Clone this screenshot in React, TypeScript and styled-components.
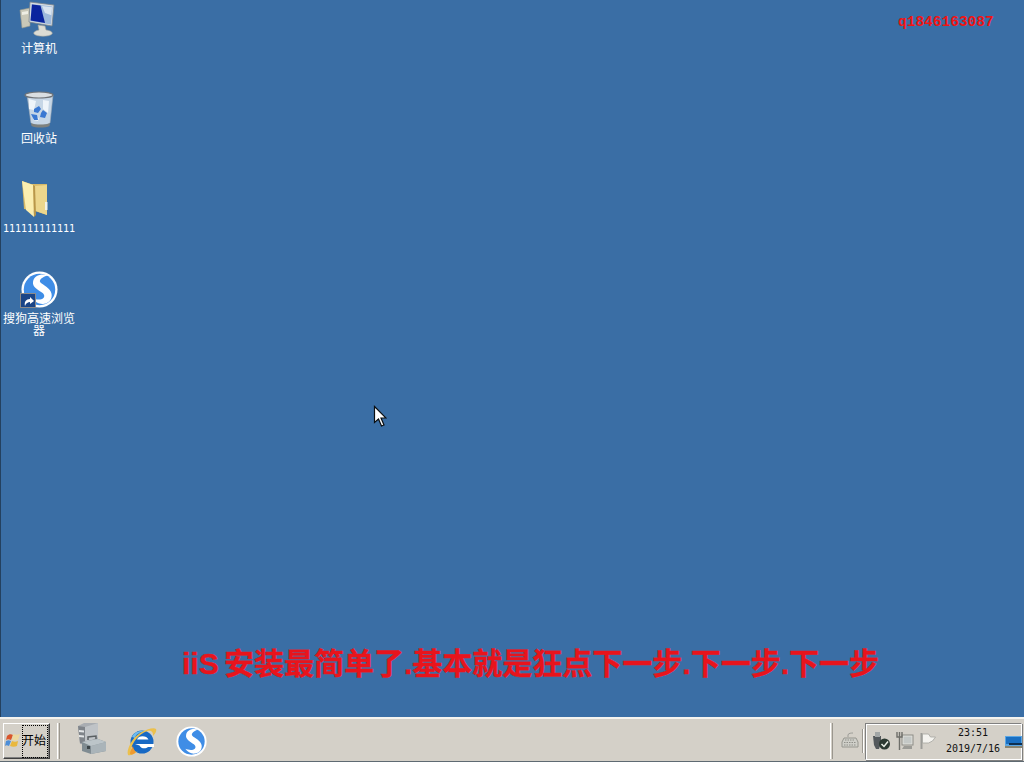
import React from "react";
import styled, { createGlobalStyle } from "styled-components";

const Global = createGlobalStyle`
  html, body { margin: 0; padding: 0; width: 1024px; height: 762px; overflow: hidden; }
  #root { width: 1024px; height: 762px; }
`;

const Screen = styled.div`
  width: 1024px; height: 762px; display: flex; flex-direction: column;
  background: #3a6ea5; position: relative; overflow: hidden;
  font-family: "Liberation Sans", "Noto Sans CJK SC", sans-serif;
`;
const Desktop = styled.main`
  flex: 1; min-height: 0; position: relative; border-left: 1px solid #24415f;
`;
const IconColumn = styled.div`
  display: flex; flex-direction: column; width: 76px;
`;
const DesktopItem = styled.div`
  height: 90px; display: flex; flex-direction: column; align-items: center; position: relative; width: 76px;
`;
const IconSlot = styled.div`
  height: 38px; width: 40px; position: relative; flex: none;
  svg { display: block; }
`;
const Label = styled.div<{ $mono?: boolean }>`
  margin-top: ${(p) => (p.$mono ? "5px" : "4px")}; width: 76px; text-align: center; color: #fff; line-height: 12px;
  font-size: ${(p) => (p.$mono ? "10px" : "12px")};
  font-family: ${(p) => (p.$mono ? '"DejaVu Sans Mono", monospace' : '"Noto Sans CJK SC", sans-serif')};
  white-space: ${(p) => (p.$mono ? "nowrap" : "normal")};
  word-break: break-all;
`;
const Watermark = styled.div`
  position: absolute; left: 897px; top: 13px; color: #f01414; font-weight: 700; font-size: 14.5px; line-height: 18px;
  font-family: "Liberation Mono", "DejaVu Sans Mono", monospace; white-space: nowrap;
`;
const Caption = styled.div`
  position: absolute; left: 181px; top: 645px; color: #e8141c; font-weight: 700; font-size: 30px; line-height: 38px;
  font-family: "Liberation Sans", "Noto Sans CJK SC", sans-serif; white-space: nowrap;
  word-spacing: -3px; -webkit-text-stroke: 0.4px #e8141c;
`;
const Cursor = styled.svg`
  position: absolute; left: 372px; top: 405px;
`;

const Taskbar = styled.footer`
  height: 45px; flex: none; box-sizing: border-box; background: #d4d0c8; border-top: 2px solid #f4f3ef;
  display: flex; align-items: center; padding: 2px 2px 0 3px; border-bottom: 1px solid #5f6a72;
`;
const StartButton = styled.button`
  width: 47px; height: 36px; box-sizing: border-box; padding: 0 0 0 1px; margin: 0;
  background: #d4d0c8; border: 1px solid; border-color: #fff #404040 #404040 #fff;
  box-shadow: inset -1px -1px 0 #808080;
  display: flex; align-items: center; color: #000;
`;
const StartFocus = styled.span`
  margin-left: 2px; width: 26px; height: 33px; box-sizing: border-box; border: 1px dotted #000;
  font: 12px/27px "Noto Sans CJK SC", sans-serif; display: block; white-space: nowrap; text-align: left; text-indent: -1px;
`;
const StartLogo = styled.svg`
  flex: none; margin-bottom: 3px;
`;
const Grip = styled.div<{ $ml: number }>`
  width: 3px; height: 36px; margin-left: ${(p) => p.$ml}px; box-sizing: border-box; flex: none;
  border-left: 1px solid #fff; border-right: 1px solid #9a968e; background: #d4d0c8;
`;
const Launch = styled.div`
  display: flex; align-items: center; margin-left: 18px; gap: 19px;
`;
const ServerGlyph = styled.svg`
  display: block; margin-bottom: 3px;
`;
const Spacer = styled.div`flex: 1;`;
const KeyboardSlot = styled.div`
  margin-left: 8px; width: 18px; height: 18px; flex: none;
`;
const ThinSep = styled.div`
  width: 1px; height: 24px; background: #9a968e; margin: 0 2px 0 3px; box-shadow: 1px 0 0 #fff; flex: none;
`;
const Tray = styled.div`
  width: 157px; height: 37px; box-sizing: border-box; flex: none; display: flex; align-items: center;
  border: 1px solid; border-color: #808080 #fff #fff #808080; padding-left: 6px; box-shadow: inset 1px 1px 0 #fff, 1px 1px 0 #808080;
`;
const TrayIcons = styled.div`display: flex; gap: 6px; align-items: center;`;
const Clock = styled.div`
  width: 64px; margin: 0 0 0 5px; text-align: center; font: 10px/16px "DejaVu Sans Mono", monospace; color: #111; flex: none;
`;
const ShowDesktop = styled.div`
  margin-top: 2px; width: 17px; flex: none;
  svg { display: block; }
`;
const Shortcut = styled.div`
  position: absolute; left: 1px; bottom: 0; width: 16px; height: 15px; box-sizing: border-box;
  background: #e8e8e8; border: 1px solid #8a8a8a; display: flex; align-items: center; justify-content: center;
`;
const SogouSpot = styled.div`
  padding: 1px 0 0 2px;
`;

const Computer = () => (
  <svg width="40" height="38" viewBox="0 0 40 38">
    <path d="M1 10l10-2v18l-8 2z" fill="#c9c8b8" stroke="#97978c" strokeWidth=".6" />
    <path d="M3 12l6-1v3l-6 1z" fill="#eeeee4" />
    <path d="M11 2l24 3-2 21-23-4z" fill="#d7dde2" stroke="#77838c" strokeWidth=".8" />
    <path d="M12.500 4l21 2.500-1.600 18L11.500 21z" fill="#9db9db" />
    <path d="M13 4.500l8.500 1 4.500 17.500-14.500-2.500z" fill="#0a249e" />
    <path d="M23 6l10 1.200-.6 8L26 13z" fill="#d9e4ef" />
    <path d="M19 25l7 1 1 4c5 .5 7 2.500 6 4-3 3-15 3-18 0-1-2 2-3.500 5-4z" fill="#dcdcd4" stroke="#a5a59c" strokeWidth=".6" />
  </svg>
);
const Recycle = () => (
  <svg width="40" height="38" viewBox="0 0 40 38">
    <path d="M8 5c5 3 18 3 26 0l-3 28c-4 3-16 3-19 0z" fill="#c6d6e6" stroke="#a2aeb8" strokeWidth=".6" />
    <ellipse cx="20" cy="5" rx="14" ry="3" fill="#d9dee2" stroke="#6f7378" strokeWidth="1.200" />
    <path d="M10 9l7 2-2 9-5-1zM24 10l6 1-1 12-5-4zM14 26l6 2-1 3-5-1z" fill="#eef4fa" />
    <path d="M12 33c4 2 15 2 19 0l-.500 3c-4 2-14 2-18 0z" fill="#7e817e" />
    <path d="M15 19l5-3 2 3-3 4-4-1zM24 20l4 3-2 5-5-1 1-4zM12 24l6 1 1 5-4 0z" fill="#3a78d2" />
  </svg>
);
const Folder = () => (
  <svg width="40" height="38" viewBox="0 0 40 38">
    <path d="M3 1l9 3h16v31l-12-4-11-2z" fill="#d6b968" />
    <path d="M14 6l14-1v30l-14-5z" fill="#ecd68c" />
    <path d="M3 1l11 4 1 32-8-7z" fill="#fbeeb0" />
    <path d="M15 37l-1-32 2 1 1 29z" fill="#b9974a" />
    <rect x="26" y="22" width="2.500" height="8" fill="#f2f2e8" />
  </svg>
);
const SogouMark = ({ size }: { size: number }) => (
  <svg width={size} height={size} viewBox="0 0 40 40">
    <circle cx="20" cy="20" r="19.500" fill="#fff" />
    <circle cx="20" cy="20" r="17" fill="#3f8de6" />
    <path d="M29 4.500c-7-2-15 0-16 7-1 6 6 9 10 12 3 2 3 6-1 7-3 1-7 0-10-1 3 4 8 7 13 6 6-1 9-6 8-11-1-6-9-9-12-12-2-3 2-6 8-8z" fill="#fff" />
  </svg>
);
const ArrowTile = () => (
  <svg width="14" height="13" viewBox="0 0 14 13">
    <rect width="14" height="13" fill="#1a4587" />
    <path d="M4 12c-1-4 1-7 5-7V3l4 4-4 3V8c-2 0-4 1-5 4z" fill="#fff" />
  </svg>
);
const Server = () => (
  <ServerGlyph width="29" height="33" viewBox="0 0 29 33">
    <path d="M0 3l6-3h14v19l-9 3-9-1z" fill="#a9adb2" />
    <path d="M0 3l7 1v17l-5-1z" fill="#7f848a" />
    <path d="M1 7l5 .500v2L1 9zM1 12l5 .500v2L1 14z" fill="#e3e6e8" />
    <path d="M7 4l13-4v14l-13 6z" fill="#bfc3c7" />
    <path d="M4 19l16-3 8 3v9l-15 3-9-3z" fill="#808c92" />
    <path d="M13 23l15-4v9l-15 3z" fill="#aab4b9" />
    <path d="M4 19l16-3 8 3-15 4z" fill="#bcc5c9" />
    <path d="M10 17v-3l8-1v3" fill="none" stroke="#5a5f63" strokeWidth="1.500" />
    <rect x="9" y="23" width="3" height="3" fill="#3d464a" />
  </ServerGlyph>
);
const IE = () => (
  <svg width="31" height="31" viewBox="0 0 31 31">
    <circle cx="16" cy="16" r="11.500" fill="#1869c4" />
    <path d="M6 11c2-5 8-7 13-6-5 1-9 3-10 7z" fill="#6dbcf0" />
    <path d="M11 13.500c1-4.500 10-4.500 11.500 0z" fill="#fff" />
    <path d="M9 18h19v3h-6c-2 2-7 2-8.500-1.500z" fill="#fff" />
    <path d="M2 29C0 24 6 12 14 7c7-4 14-6 16-4 1 2-1 5-3 7 0-2 0-4-2-5-3-1-9 2-13 6-5 5-8 12-7 15 1 1 4 1 7-1-3 3-8 5-10 4z" fill="#ecc04c" />
    <path d="M4 28c0-2 1-5 3-8 0 2 1 4 3 6-2 2-4 3-6 2z" fill="#f09a30" />
  </svg>
);
const Flag = () => (
  <svg width="16" height="16" viewBox="0 0 16 16">
    <path d="M1.500 16V0" stroke="#9c9c98" strokeWidth="2" />
    <path d="M2.500 1h6l2 3h5l-3 4-4 2h-6z" fill="#f4f3ef" stroke="#a4a4a0" strokeWidth=".8" />
  </svg>
);
const Network = () => (
  <svg width="18" height="18" viewBox="0 0 18 18">
    <rect x="6" y="3" width="11" height="10" fill="#e2e2dc" stroke="#8b8b86" />
    <rect x="7.500" y="4.500" width="8" height="7" fill="#c4c8c6" />
    <path d="M8 14h8v3H6z" fill="#9b9b96" />
    <path d="M1 0v5h5V0M3.500 0v18" fill="none" stroke="#6f6f6a" strokeWidth="1.400" />
  </svg>
);
const Shield = () => (
  <svg width="18" height="18" viewBox="0 0 18 18">
    <path d="M1 4h8v7l-2 6H4l-2-4z" fill="#54595c" />
    <rect x="3" y="0" width="5" height="5" fill="#a2a6a6" />
    <circle cx="12.500" cy="12" r="5.500" fill="#2c3a32" />
    <path d="M9.500 12l2.500 2.500 4-5" fill="none" stroke="#e9efe6" strokeWidth="1.500" />
  </svg>
);
const Keyboard = () => (
  <svg width="18" height="18" viewBox="0 0 18 18">
    <path d="M7 5V3c0-2 4-2 5-2" fill="none" stroke="#9d9d98" />
    <path d="M3 6h12l2 4v5H1v-5z" fill="#cfcfc9" stroke="#96968f" />
    <path d="M4 8h10M3 10.500h12M3 13h12" stroke="#8f8f89" strokeDasharray="1.500 1" />
  </svg>
);
const DesktopGlyph = () => (
  <svg width="17" height="12" viewBox="0 0 17 12">
    <rect width="17" height="12" fill="#5aa6e4" />
    <rect x="1" y="1" width="15" height="7" fill="#1a6fc2" />
    <rect x="4" y="7" width="13" height="2" fill="#0d2f52" />
    <rect y="10" width="17" height="2" fill="#8a8470" />
  </svg>
);
const Logo = () => (
  <StartLogo width="15" height="14" viewBox="0 0 15 14">
    <path d="M2 3c2-2 4-2 6-1L6 7C4 6 2 6 1 7z" fill="#d9552b" />
    <path d="M8 1c2 1 5 1 7 0l-2 6c-2 1-4 1-6 0z" fill="#ecd9a0" />
    <path d="M1 8c2-1 3-1 5 0L4 13c-2-1-3-1-4 0z" fill="#4d8ed8" />
    <path d="M7 8c2 1 4 1 6 0l-1 5c-2 1-5 1-7 0z" fill="#e9b83d" />
  </StartLogo>
);
const ArrowCursor = () => (
  <Cursor width="14" height="23" viewBox="0 0 14 23">
    <path d="M1.500 1.500v16l4-3.500 3 7 2.500-1-3-7h5z" fill="#fff" stroke="#0b0f12" strokeWidth="1.200" />
  </Cursor>
);

export default function App() {
  return (
    <Screen>
      <Global />
      <Desktop>
        <IconColumn>
          <DesktopItem>
            <IconSlot><Computer /></IconSlot>
            <Label>计算机</Label>
          </DesktopItem>
          <DesktopItem>
            <IconSlot><Recycle /></IconSlot>
            <Label>回收站</Label>
          </DesktopItem>
          <DesktopItem>
            <IconSlot><Folder /></IconSlot>
            <Label $mono>111111111111</Label>
          </DesktopItem>
          <DesktopItem>
            <IconSlot>
              <SogouSpot><SogouMark size={37} /></SogouSpot>
              <Shortcut><ArrowTile /></Shortcut>
            </IconSlot>
            <Label>搜狗高速浏览器</Label>
          </DesktopItem>
        </IconColumn>
        <Watermark>q1846163087</Watermark>
        <Caption>iiS 安装最简单了.基本就是狂点下一步.下一步.下一步</Caption>
        <ArrowCursor />
      </Desktop>
      <Taskbar>
        <StartButton>
          <Logo />
          <StartFocus>开始</StartFocus>
        </StartButton>
        <Grip $ml={7} />
        <Launch>
          <Server />
          <IE />
          <SogouMark size={31} />
        </Launch>
        <Spacer />
        <Grip $ml={0} />
        <KeyboardSlot><Keyboard /></KeyboardSlot>
        <ThinSep />
        <Tray>
          <TrayIcons>
            <Shield />
            <Network />
            <Flag />
          </TrayIcons>
          <Clock>23:51<br />2019/7/16</Clock>
          <ShowDesktop><DesktopGlyph /></ShowDesktop>
        </Tray>
      </Taskbar>
    </Screen>
  );
}
